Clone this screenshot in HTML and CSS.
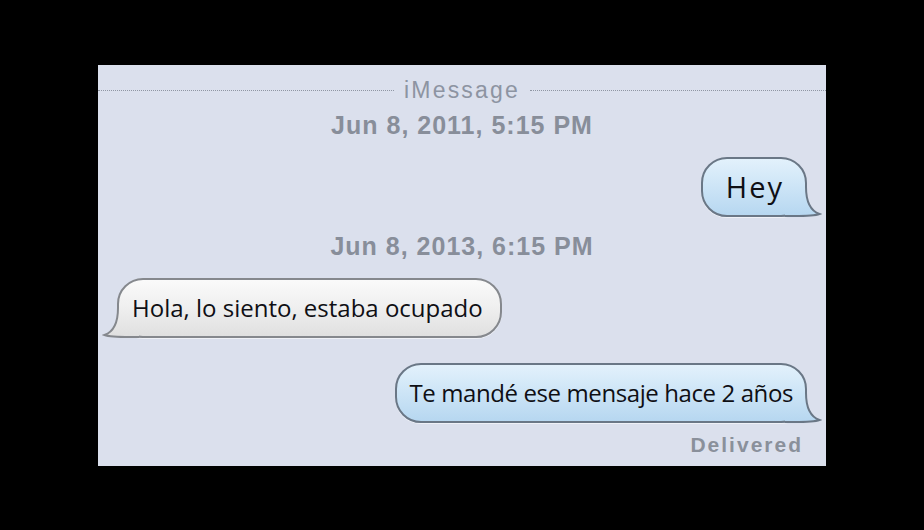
FILE: index.html
```html
<!DOCTYPE html>
<html lang="es">
<head>
<meta charset="utf-8">
<title>iMessage</title>
<link rel="stylesheet" href="styles.css">
</head>
<body>
<div class="panel">
  <div class="service">
    <span class="dots"></span>
    <span class="service-name">iMessage</span>
    <span class="dots"></span>
  </div>
  <div class="stamp stamp-first">Jun 8, 2011, 5:15 PM</div>

  <div class="row row-out row-hey">
    <div class="bubble bubble-blue bubble-big">Hey<svg class="tail tail-right" width="42" height="60" aria-hidden="true"><defs><linearGradient id="gb1" gradientUnits="userSpaceOnUse" x1="0" y1="0" x2="0" y2="60"><stop offset="0" stop-color="#e4f2fc"/><stop offset="0.45" stop-color="#cfe6f7"/><stop offset="1" stop-color="#b5d6f0"/></linearGradient></defs><path d="M27 30 C27 46 32 54 40.5 57 C34 59.5 22 59 6 59 L6 56 L12 53 L17 50 L21 45 L23.5 36 L25 30 Z" fill="url(#gb1)"/><path d="M27 30 C27 46 32 54 40.5 57 C34 59.5 22 59 6 59" fill="none" stroke="#6a7786" stroke-width="2"/></svg></div>
  </div>

  <div class="stamp stamp-second">Jun 8, 2013, 6:15 PM</div>

  <div class="row row-in row-hola">
    <div class="bubble bubble-grey bubble-wide">Hola, lo siento, estaba ocupado<svg class="tail tail-left" width="42" height="60" aria-hidden="true"><defs><linearGradient id="gg1" gradientUnits="userSpaceOnUse" x1="0" y1="0" x2="0" y2="60"><stop offset="0" stop-color="#fbfbfb"/><stop offset="0.45" stop-color="#f0f0f0"/><stop offset="1" stop-color="#dfdfdf"/></linearGradient></defs><path d="M27 30 C27 46 32 54 40.5 57 C34 59.5 22 59 6 59 L6 56 L12 53 L17 50 L21 45 L23.5 36 L25 30 Z" fill="url(#gg1)"/><path d="M27 30 C27 46 32 54 40.5 57 C34 59.5 22 59 6 59" fill="none" stroke="#85888d" stroke-width="2"/></svg></div>
  </div>

  <div class="row row-out row-te">
    <div class="bubble bubble-blue bubble-tight">Te mandé ese mensaje hace 2 años<svg class="tail tail-right" width="42" height="60" aria-hidden="true"><defs><linearGradient id="gb2" gradientUnits="userSpaceOnUse" x1="0" y1="0" x2="0" y2="60"><stop offset="0" stop-color="#e4f2fc"/><stop offset="0.45" stop-color="#cfe6f7"/><stop offset="1" stop-color="#b5d6f0"/></linearGradient></defs><path d="M27 30 C27 46 32 54 40.5 57 C34 59.5 22 59 6 59 L6 56 L12 53 L17 50 L21 45 L23.5 36 L25 30 Z" fill="url(#gb2)"/><path d="M27 30 C27 46 32 54 40.5 57 C34 59.5 22 59 6 59" fill="none" stroke="#6a7786" stroke-width="2"/></svg></div>
  </div>

  <div class="status">Delivered</div>
</div>
</body>
</html>
```

FILE: styles.css
```css
html, body {
  margin: 0;
  padding: 0;
  background: #000;
}

body {
  width: 924px;
  height: 530px;
  overflow: hidden;
}

.panel {
  margin: 65px 0 0 98px;
  width: 728px;
  height: 401px;
  box-sizing: border-box;
  padding-top: 12px;
  background: #dbe0ed;
  display: flex;
  flex-direction: column;
  font-family: "Liberation Sans", Arial, sans-serif;
}

.service {
  display: flex;
  align-items: center;
  gap: 10px;
  height: 26px;
}

.dots {
  flex: 1;
  height: 0;
  border-top: 1px dotted #8f96a3;
}

.service-name {
  font-size: 23px;
  line-height: 26px;
  letter-spacing: 2.2px;
  color: #8d94a2;
}

.stamp {
  text-align: center;
  font-size: 25px;
  line-height: 30px;
  font-weight: bold;
  letter-spacing: 1px;
  color: #888e9a;
}

.stamp-first {
  margin-top: 7px;
}

.stamp-second {
  margin-top: 14px;
}

.row {
  display: flex;
}

.row-out {
  justify-content: flex-end;
  padding-right: 19px;
}

.row-in {
  justify-content: flex-start;
  padding-left: 19px;
}

.row-hey {
  margin-top: 17px;
}

.row-hola {
  margin-top: 17px;
}

.row-te {
  margin-top: 25px;
}

.bubble {
  position: relative;
  box-sizing: border-box;
  height: 60px;
  border: 2px solid;
  border-radius: 26px;
  padding: 0 14px 0 13px;
  font-family: "Open Sans", "Noto Sans", sans-serif;
  font-size: 24px;
  line-height: 56px;
  color: #0f0f14;
  white-space: nowrap;
  background-origin: border-box;
}

.bubble-big {
  font-size: 29px;
  letter-spacing: 2px;
  padding: 0 21px 0 23px;
}

.bubble-wide {
  padding: 0 17px 0 13px;
}

.bubble-tight {
  letter-spacing: -0.4px;
  padding: 0 12px 0 12px;
}

.bubble-blue {
  border-color: #6a7786;
  background-image: linear-gradient(to bottom, #e4f2fc 0%, #cfe6f7 45%, #b5d6f0 100%);
  box-shadow: 0 1px 0 rgba(255, 255, 255, 0.55);
}

.bubble-grey {
  border-color: #85888d;
  background-image: linear-gradient(to bottom, #fbfbfb 0%, #f0f0f0 45%, #dfdfdf 100%);
  box-shadow: 0 1px 0 rgba(255, 255, 255, 0.55);
}

.tail {
  position: absolute;
  top: -2px;
  display: block;
  overflow: visible;
}

.tail-right {
  right: -16px;
}

.tail-left {
  left: -16px;
  transform: scaleX(-1);
}

.status {
  margin-top: 7px;
  padding-right: 23px;
  text-align: right;
  font-size: 21px;
  line-height: 30px;
  font-weight: bold;
  letter-spacing: 2px;
  color: #8a909b;
}
```
